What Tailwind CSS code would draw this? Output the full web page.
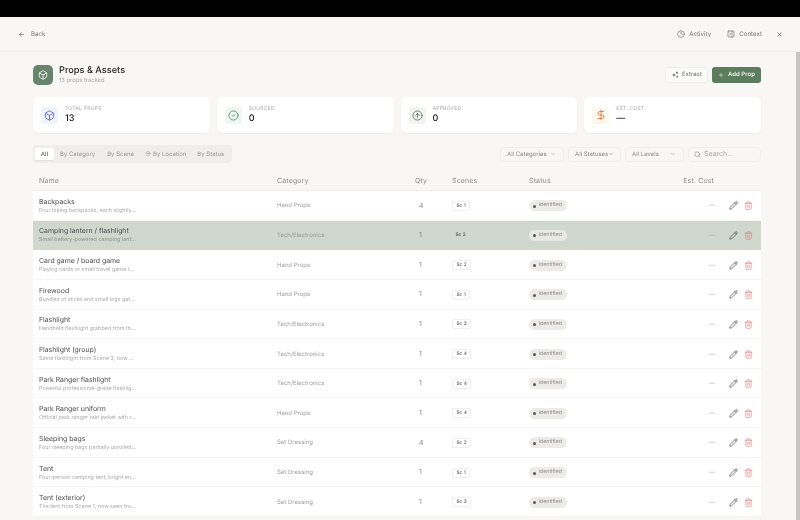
<!DOCTYPE html>
<html lang="en">

<head>
    <meta charset="UTF-8">
    <title>Props &amp; Assets</title>
    <script src="https://cdn.jsdelivr.net/npm/@tailwindcss/browser@4"></script>
</head>

<body class="bg-[#f8f7f5]">
    <svg class="hidden">
        <symbol id="box" viewBox="0 0 24 24" fill="none" stroke="currentColor" stroke-width="2" stroke-linecap="round" stroke-linejoin="round"><path d="M21 8a2 2 0 0 0-1-1.73l-7-4a2 2 0 0 0-2 0l-7 4A2 2 0 0 0 3 8v8a2 2 0 0 0 1 1.73l7 4a2 2 0 0 0 2 0l7-4A2 2 0 0 0 21 16Z"/><path d="m3.3 7 8.7 5 8.7-5"/><path d="M12 22V12"/></symbol>
        <symbol id="chev" viewBox="0 0 24 24" fill="none" stroke="currentColor" stroke-width="2" stroke-linecap="round" stroke-linejoin="round"><path d="m6 9 6 6 6-6"/></symbol>
        <symbol id="pencil" viewBox="0 0 24 24" fill="none" stroke="currentColor" stroke-width="2" stroke-linecap="round" stroke-linejoin="round"><path d="M21.17 6.81a2.82 2.82 0 0 0-3.99-3.99L3.84 16.17a2 2 0 0 0-.5.83l-1.32 4.35a.5.5 0 0 0 .62.62l4.35-1.32a2 2 0 0 0 .83-.5z"/><path d="m15 5 4 4"/></symbol>
        <symbol id="trash" viewBox="0 0 24 24" fill="none" stroke="currentColor" stroke-width="2" stroke-linecap="round" stroke-linejoin="round"><path d="M3 6h18"/><path d="M19 6v14a2 2 0 0 1-2 2H7a2 2 0 0 1-2-2V6"/><path d="M8 6V4a2 2 0 0 1 2-2h4a2 2 0 0 1 2 2v2"/><path d="M10 11v6"/><path d="M14 11v6"/></symbol>
    </svg>

    <div class="relative h-[520px] w-[800px] overflow-hidden font-['Inter',sans-serif] text-[#3d3d3d] blur-[0.3px] [text-rendering:geometricPrecision]">
    <div class="h-[17px] bg-black"></div>

    <header class="flex h-[35px] items-center justify-between border-b border-[#f1f0ed] pl-[18px] pr-[17px] pt-[1px]">
        <div class="flex items-center gap-[6px] text-[6.2px] text-[#777]">
            <svg class="h-[7px] w-[7px] text-[#555]" viewBox="0 0 24 24" fill="none" stroke="currentColor" stroke-width="2" stroke-linecap="round" stroke-linejoin="round"><path d="m12 19-7-7 7-7"/><path d="M19 12H5"/></svg>
            <span>Back</span>
        </div>
        <div class="flex items-center text-[6.2px] text-[#6f6f6f]">
            <svg class="mr-[4px] h-[8px] w-[8px]" viewBox="0 0 24 24" fill="none" stroke="currentColor" stroke-width="2" stroke-linecap="round" stroke-linejoin="round"><circle cx="12" cy="12" r="10"/><path d="M12 6v6l4 2"/></svg>
            <span>Activity</span>
            <svg class="ml-[16px] mr-[4px] h-[8px] w-[8px]" viewBox="0 0 24 24" fill="none" stroke="currentColor" stroke-width="2" stroke-linecap="round" stroke-linejoin="round"><rect x="3" y="3" width="18" height="18" rx="2"/><path d="M15 3v18"/><path d="m8 9 3 3-3 3"/></svg>
            <span>Context</span>
            <svg class="ml-[14px] h-[7px] w-[7px] text-[#444]" viewBox="0 0 24 24" fill="none" stroke="currentColor" stroke-width="2" stroke-linecap="round" stroke-linejoin="round"><path d="M18 6 6 18"/><path d="m6 6 12 12"/></svg>
        </div>
    </header>

    <main class="pl-[33px] pr-[39px]">
        <!-- title row -->
        <div class="flex h-[45px] items-center justify-between">
            <div class="flex items-center gap-[6px]">
                <div class="flex h-[20px] w-[20px] items-center justify-center rounded-[5px] bg-[#66856a] text-white">
                    <svg class="h-[10px] w-[10px]"><use href="#box"/></svg>
                </div>
                <div>
                    <div class="text-[9.2px] leading-[12px] font-medium text-[#1f1f1f]">Props &amp; Assets</div>
                    <div class="text-[5.8px] leading-[8px] text-[#a5a5a5]">13 props tracked</div>
                </div>
            </div>
            <div class="flex items-center gap-[4px]">
                <div class="flex h-[16px] w-[43px] items-center justify-center gap-[3px] rounded-[3px] border border-[#f0efec] bg-[#fafaf8] text-[6px] text-[#6f6f6f]">
                    <svg class="h-[8px] w-[8px]" viewBox="0 0 24 24" fill="currentColor"><path d="M9 5l1.8 5.2L16 12l-5.2 1.8L9 19l-1.8-5.2L2 12l5.2-1.8z"/><circle cx="18" cy="5" r="3"/><circle cx="19" cy="17" r="2.5"/></svg>
                    <span>Extract</span>
                </div>
                <div class="flex h-[16px] w-[49px] items-center justify-center gap-[4px] rounded-[3px] bg-[#5c7c5e] text-[6px] font-semibold text-[#eef2ec]">
                    <svg class="h-[6px] w-[6px]" viewBox="0 0 24 24" fill="none" stroke="currentColor" stroke-width="2" stroke-linecap="round"><path d="M5 12h14"/><path d="M12 5v14"/></svg>
                    <span>Add Prop</span>
                </div>
            </div>
        </div>

        <!-- stats -->
        <div class="grid grid-cols-4 gap-[7px]">
            <div class="flex h-[36px] items-center gap-[7px] rounded-[5px] bg-white pl-[8px] shadow-[0_1px_2px_rgba(0,0,0,0.05)]">
                <div class="flex h-[17px] w-[17px] items-center justify-center rounded-[3px] bg-[#eff3fe] text-[#5b70d8]">
                    <svg class="h-[11px] w-[11px]"><use href="#box"/></svg>
                </div>
                <div>
                    <div class="text-[5px] leading-[7px] tracking-[0.05em] text-[#a8a8a8]">TOTAL PROPS</div>
                    <div class="text-[9px] leading-[12px] font-medium text-[#1c1c1c]">13</div>
                </div>
            </div>
            <div class="flex h-[36px] items-center gap-[7px] rounded-[5px] bg-white pl-[8px] shadow-[0_1px_2px_rgba(0,0,0,0.05)]">
                <div class="flex h-[17px] w-[17px] items-center justify-center rounded-[3px] bg-[#eef7f1] text-[#5a9478]">
                    <svg class="h-[11px] w-[11px]" viewBox="0 0 24 24" fill="none" stroke="currentColor" stroke-width="2" stroke-linecap="round" stroke-linejoin="round"><circle cx="12" cy="12" r="10"/><path d="m9 12 2 2 4-4"/></svg>
                </div>
                <div>
                    <div class="text-[5px] leading-[7px] tracking-[0.05em] text-[#a8a8a8]">SOURCED</div>
                    <div class="text-[9px] leading-[12px] font-medium text-[#1c1c1c]">0</div>
                </div>
            </div>
            <div class="flex h-[36px] items-center gap-[7px] rounded-[5px] bg-white pl-[8px] shadow-[0_1px_2px_rgba(0,0,0,0.05)]">
                <div class="flex h-[17px] w-[17px] items-center justify-center rounded-[3px] bg-[#f1f3ef] text-[#64796a]">
                    <svg class="h-[11px] w-[11px]" viewBox="0 0 24 24" fill="none" stroke="currentColor" stroke-width="2" stroke-linecap="round" stroke-linejoin="round"><circle cx="12" cy="12" r="10"/><path d="m16 12-4-4-4 4"/><path d="M12 16V8"/></svg>
                </div>
                <div>
                    <div class="text-[5px] leading-[7px] tracking-[0.05em] text-[#a8a8a8]">APPROVED</div>
                    <div class="text-[9px] leading-[12px] font-medium text-[#1c1c1c]">0</div>
                </div>
            </div>
            <div class="flex h-[36px] items-center gap-[7px] rounded-[5px] bg-white pl-[8px] shadow-[0_1px_2px_rgba(0,0,0,0.05)]">
                <div class="flex h-[17px] w-[17px] items-center justify-center rounded-[3px] bg-[#fdf7ee] text-[#d58a54]">
                    <svg class="h-[12px] w-[12px]" viewBox="0 0 24 24" fill="none" stroke="currentColor" stroke-width="2" stroke-linecap="round" stroke-linejoin="round"><path d="M12 2v20"/><path d="M17 5H9.5a3.5 3.5 0 0 0 0 7h5a3.5 3.5 0 0 1 0 7H6"/></svg>
                </div>
                <div>
                    <div class="text-[5px] leading-[7px] tracking-[0.05em] text-[#a8a8a8]">EST. COST</div>
                    <div class="text-[9px] leading-[12px] font-medium text-[#1c1c1c]">—</div>
                </div>
            </div>
        </div>

        <!-- tabs and filters -->
        <div class="mt-[12px] flex items-center justify-between">
            <div class="flex h-[18px] w-[199px] items-center rounded-[4px] bg-[#efeeeb] pl-[2px] text-[6px] whitespace-nowrap text-[#9a9a9a]">
                <div class="flex h-[12px] w-[19px] items-center justify-center rounded-[2px] bg-white font-medium text-[#666] shadow-[0_1px_1px_rgba(0,0,0,0.05)]">All</div>
                <div class="ml-[6px]">By Category</div>
                <div class="ml-[12px]">By Scene</div>
                <svg class="ml-[11px] mr-[2px] h-[6px] w-[6px]" viewBox="0 0 24 24" fill="none" stroke="currentColor" stroke-width="2" stroke-linecap="round" stroke-linejoin="round"><path d="M20 10c0 5-5.5 10.2-7.4 11.8a1 1 0 0 1-1.2 0C9.5 20.2 4 15 4 10a8 8 0 0 1 16 0"/><circle cx="12" cy="10" r="3"/></svg>
                <div>By Location</div>
                <div class="ml-[11px]">By Status</div>
            </div>
            <div class="flex items-center text-[6px] whitespace-nowrap text-[#8a8a8a]">
                <div class="flex h-[15px] w-[64px] items-center justify-between rounded-[4px] border border-[#f0efec] pl-[6px] pr-[7px]"><span>All Categories</span><svg class="h-[6px] w-[6px]"><use href="#chev"/></svg></div>
                <div class="ml-[4px] flex h-[15px] w-[53px] items-center justify-between rounded-[4px] border border-[#f0efec] pl-[6px] pr-[6px]"><span>All Statuses</span><svg class="h-[6px] w-[6px]"><use href="#chev"/></svg></div>
                <div class="ml-[4px] flex h-[15px] w-[59px] items-center justify-between rounded-[4px] border border-[#f0efec] pl-[6px] pr-[7px]"><span>All Levels</span><svg class="h-[6px] w-[6px]"><use href="#chev"/></svg></div>
                <div class="ml-[4px] flex h-[15px] w-[73px] items-center gap-[3px] rounded-[5px] border border-[#f0efec] pl-[5px] text-[7px] text-[#a5a5a5]">
                    <svg class="h-[7px] w-[7px] text-[#888]" viewBox="0 0 24 24" fill="none" stroke="currentColor" stroke-width="2" stroke-linecap="round"><circle cx="11" cy="11" r="8"/><path d="m21 21-4.3-4.3"/></svg>
                    <span>Search...</span>
                </div>
            </div>
        </div>

        <!-- table -->
        <div class="mt-[9px] rounded-t-[4px] bg-white text-[6px] text-[#a0a0a0]">
            <div class="grid h-[19px] grid-cols-[238px_138px_37px_77px_117px_75px_40px] items-center rounded-t-[4px] border-b border-[#f0efec] bg-[#f8f7f5] pl-[6px] pt-[1px] text-[7px] tracking-[0.02em] text-[#8c8c8c]">
                <div>Name</div><div>Category</div><div>Qty</div><div>Scenes</div><div>Status</div><div class="pr-[7px] text-right">Est. Cost</div><div></div>
            </div>

            <div class="grid h-[29.65px] grid-cols-[238px_138px_37px_77px_117px_75px_40px] items-center border-b border-[#f6f5f3] pl-[6px] pt-[1px]">
                <div><div class="text-[6.9px] leading-[11px] text-[#4a4a4a]">Backpacks</div><div class="text-[5.4px] leading-[9px] text-[#aaa]">Four hiking backpacks, each slightly...</div></div>
                <div>Hand Props</div><div class="pl-[4px] text-[7px] text-[#888]">4</div>
                <div class="flex"><span class="rounded-[2px] border border-[#f0efec] px-[3.5px] text-[4.8px] leading-[8px] font-medium text-[#666]">Sc 1</span></div>
                <div class="flex"><span class="flex h-[11px] w-[38px] items-center gap-[2.5px] rounded-full bg-[#ecebe7] pl-[4px] pt-[1px] text-[5.3px] text-[#8e8e8e]"><i class="h-[3px] w-[3px] rounded-full bg-[#555560]"></i>Identified</span></div>
                <div class="pr-[6px] text-right text-[#aaa]">—</div>
                <div class="flex items-center gap-[6px] pl-[8px] text-[#555]"><svg class="h-[9px] w-[9px]"><use href="#pencil"/></svg><svg class="h-[9px] w-[9px] text-[#e58a88]"><use href="#trash"/></svg></div>
            </div>

            <div class="grid h-[29.65px] grid-cols-[238px_138px_37px_77px_117px_75px_40px] items-center border-b border-[#d0d8cd] bg-[#d0d8cd] pl-[6px] pt-[1px] text-[#969c94]">
                <div><div class="text-[6.9px] leading-[11px] text-[#4a4a4a]">Camping lantern / flashlight</div><div class="text-[5.4px] leading-[9px] text-[#8f958c]">Small battery-powered camping lant...</div></div>
                <div>Tech/Electronics</div><div class="pl-[4px] text-[7px] text-[#7f857d]">1</div>
                <div class="flex"><span class="px-[3.5px] text-[4.8px] leading-[8px] font-medium text-[#555a53]">Sc 2</span></div>
                <div class="flex"><span class="flex h-[11px] w-[38px] items-center gap-[2.5px] rounded-full bg-[#e9e9e4] pl-[4px] pt-[1px] text-[5.3px] text-[#8e8e8e]"><i class="h-[3px] w-[3px] rounded-full bg-[#555560]"></i>Identified</span></div>
                <div class="pr-[6px] text-right text-[#9aa097]">—</div>
                <div class="flex items-center gap-[6px] pl-[8px] text-[#555]"><svg class="h-[9px] w-[9px]"><use href="#pencil"/></svg><svg class="h-[9px] w-[9px] text-[#dc8583]"><use href="#trash"/></svg></div>
            </div>

            <div class="grid h-[29.65px] grid-cols-[238px_138px_37px_77px_117px_75px_40px] items-center border-b border-[#f6f5f3] pl-[6px] pt-[1px]">
                <div><div class="text-[6.9px] leading-[11px] text-[#4a4a4a]">Card game / board game</div><div class="text-[5.4px] leading-[9px] text-[#aaa]">Playing cards or small travel game t...</div></div>
                <div>Hand Props</div><div class="pl-[4px] text-[7px] text-[#888]">1</div>
                <div class="flex"><span class="rounded-[2px] border border-[#f0efec] px-[3.5px] text-[4.8px] leading-[8px] font-medium text-[#666]">Sc 2</span></div>
                <div class="flex"><span class="flex h-[11px] w-[38px] items-center gap-[2.5px] rounded-full bg-[#ecebe7] pl-[4px] pt-[1px] text-[5.3px] text-[#8e8e8e]"><i class="h-[3px] w-[3px] rounded-full bg-[#555560]"></i>Identified</span></div>
                <div class="pr-[6px] text-right text-[#aaa]">—</div>
                <div class="flex items-center gap-[6px] pl-[8px] text-[#555]"><svg class="h-[9px] w-[9px]"><use href="#pencil"/></svg><svg class="h-[9px] w-[9px] text-[#e58a88]"><use href="#trash"/></svg></div>
            </div>

            <div class="grid h-[29.65px] grid-cols-[238px_138px_37px_77px_117px_75px_40px] items-center border-b border-[#f6f5f3] pl-[6px] pt-[1px]">
                <div><div class="text-[6.9px] leading-[11px] text-[#4a4a4a]">Firewood</div><div class="text-[5.4px] leading-[9px] text-[#aaa]">Bundles of sticks and small logs gat...</div></div>
                <div>Hand Props</div><div class="pl-[4px] text-[7px] text-[#888]">1</div>
                <div class="flex"><span class="rounded-[2px] border border-[#f0efec] px-[3.5px] text-[4.8px] leading-[8px] font-medium text-[#666]">Sc 1</span></div>
                <div class="flex"><span class="flex h-[11px] w-[38px] items-center gap-[2.5px] rounded-full bg-[#ecebe7] pl-[4px] pt-[1px] text-[5.3px] text-[#8e8e8e]"><i class="h-[3px] w-[3px] rounded-full bg-[#555560]"></i>Identified</span></div>
                <div class="pr-[6px] text-right text-[#aaa]">—</div>
                <div class="flex items-center gap-[6px] pl-[8px] text-[#555]"><svg class="h-[9px] w-[9px]"><use href="#pencil"/></svg><svg class="h-[9px] w-[9px] text-[#e58a88]"><use href="#trash"/></svg></div>
            </div>

            <div class="grid h-[29.65px] grid-cols-[238px_138px_37px_77px_117px_75px_40px] items-center border-b border-[#f6f5f3] pl-[6px] pt-[1px]">
                <div><div class="text-[6.9px] leading-[11px] text-[#4a4a4a]">Flashlight</div><div class="text-[5.4px] leading-[9px] text-[#aaa]">Handheld flashlight grabbed from th...</div></div>
                <div>Tech/Electronics</div><div class="pl-[4px] text-[7px] text-[#888]">1</div>
                <div class="flex"><span class="rounded-[2px] border border-[#f0efec] px-[3.5px] text-[4.8px] leading-[8px] font-medium text-[#666]">Sc 3</span></div>
                <div class="flex"><span class="flex h-[11px] w-[38px] items-center gap-[2.5px] rounded-full bg-[#ecebe7] pl-[4px] pt-[1px] text-[5.3px] text-[#8e8e8e]"><i class="h-[3px] w-[3px] rounded-full bg-[#555560]"></i>Identified</span></div>
                <div class="pr-[6px] text-right text-[#aaa]">—</div>
                <div class="flex items-center gap-[6px] pl-[8px] text-[#555]"><svg class="h-[9px] w-[9px]"><use href="#pencil"/></svg><svg class="h-[9px] w-[9px] text-[#e58a88]"><use href="#trash"/></svg></div>
            </div>

            <div class="grid h-[29.65px] grid-cols-[238px_138px_37px_77px_117px_75px_40px] items-center border-b border-[#f6f5f3] pl-[6px] pt-[1px]">
                <div><div class="text-[6.9px] leading-[11px] text-[#4a4a4a]">Flashlight (group)</div><div class="text-[5.4px] leading-[9px] text-[#aaa]">Same flashlight from Scene 3, now ...</div></div>
                <div>Tech/Electronics</div><div class="pl-[4px] text-[7px] text-[#888]">1</div>
                <div class="flex"><span class="rounded-[2px] border border-[#f0efec] px-[3.5px] text-[4.8px] leading-[8px] font-medium text-[#666]">Sc 4</span></div>
                <div class="flex"><span class="flex h-[11px] w-[38px] items-center gap-[2.5px] rounded-full bg-[#ecebe7] pl-[4px] pt-[1px] text-[5.3px] text-[#8e8e8e]"><i class="h-[3px] w-[3px] rounded-full bg-[#555560]"></i>Identified</span></div>
                <div class="pr-[6px] text-right text-[#aaa]">—</div>
                <div class="flex items-center gap-[6px] pl-[8px] text-[#555]"><svg class="h-[9px] w-[9px]"><use href="#pencil"/></svg><svg class="h-[9px] w-[9px] text-[#e58a88]"><use href="#trash"/></svg></div>
            </div>

            <div class="grid h-[29.65px] grid-cols-[238px_138px_37px_77px_117px_75px_40px] items-center border-b border-[#f6f5f3] pl-[6px] pt-[1px]">
                <div><div class="text-[6.9px] leading-[11px] text-[#4a4a4a]">Park Ranger flashlight</div><div class="text-[5.4px] leading-[9px] text-[#aaa]">Powerful professional-grade flashlig...</div></div>
                <div>Tech/Electronics</div><div class="pl-[4px] text-[7px] text-[#888]">1</div>
                <div class="flex"><span class="rounded-[2px] border border-[#f0efec] px-[3.5px] text-[4.8px] leading-[8px] font-medium text-[#666]">Sc 4</span></div>
                <div class="flex"><span class="flex h-[11px] w-[38px] items-center gap-[2.5px] rounded-full bg-[#ecebe7] pl-[4px] pt-[1px] text-[5.3px] text-[#8e8e8e]"><i class="h-[3px] w-[3px] rounded-full bg-[#555560]"></i>Identified</span></div>
                <div class="pr-[6px] text-right text-[#aaa]">—</div>
                <div class="flex items-center gap-[6px] pl-[8px] text-[#555]"><svg class="h-[9px] w-[9px]"><use href="#pencil"/></svg><svg class="h-[9px] w-[9px] text-[#e58a88]"><use href="#trash"/></svg></div>
            </div>

            <div class="grid h-[29.65px] grid-cols-[238px_138px_37px_77px_117px_75px_40px] items-center border-b border-[#f6f5f3] pl-[6px] pt-[1px]">
                <div><div class="text-[6.9px] leading-[11px] text-[#4a4a4a]">Park Ranger uniform</div><div class="text-[5.4px] leading-[9px] text-[#aaa]">Official park ranger rain jacket with r...</div></div>
                <div>Hand Props</div><div class="pl-[4px] text-[7px] text-[#888]">1</div>
                <div class="flex"><span class="rounded-[2px] border border-[#f0efec] px-[3.5px] text-[4.8px] leading-[8px] font-medium text-[#666]">Sc 4</span></div>
                <div class="flex"><span class="flex h-[11px] w-[38px] items-center gap-[2.5px] rounded-full bg-[#ecebe7] pl-[4px] pt-[1px] text-[5.3px] text-[#8e8e8e]"><i class="h-[3px] w-[3px] rounded-full bg-[#555560]"></i>Identified</span></div>
                <div class="pr-[6px] text-right text-[#aaa]">—</div>
                <div class="flex items-center gap-[6px] pl-[8px] text-[#555]"><svg class="h-[9px] w-[9px]"><use href="#pencil"/></svg><svg class="h-[9px] w-[9px] text-[#e58a88]"><use href="#trash"/></svg></div>
            </div>

            <div class="grid h-[29.65px] grid-cols-[238px_138px_37px_77px_117px_75px_40px] items-center border-b border-[#f6f5f3] pl-[6px] pt-[1px]">
                <div><div class="text-[6.9px] leading-[11px] text-[#4a4a4a]">Sleeping bags</div><div class="text-[5.4px] leading-[9px] text-[#aaa]">Four sleeping bags partially unrolled...</div></div>
                <div>Set Dressing</div><div class="pl-[4px] text-[7px] text-[#888]">4</div>
                <div class="flex"><span class="rounded-[2px] border border-[#f0efec] px-[3.5px] text-[4.8px] leading-[8px] font-medium text-[#666]">Sc 2</span></div>
                <div class="flex"><span class="flex h-[11px] w-[38px] items-center gap-[2.5px] rounded-full bg-[#ecebe7] pl-[4px] pt-[1px] text-[5.3px] text-[#8e8e8e]"><i class="h-[3px] w-[3px] rounded-full bg-[#555560]"></i>Identified</span></div>
                <div class="pr-[6px] text-right text-[#aaa]">—</div>
                <div class="flex items-center gap-[6px] pl-[8px] text-[#555]"><svg class="h-[9px] w-[9px]"><use href="#pencil"/></svg><svg class="h-[9px] w-[9px] text-[#e58a88]"><use href="#trash"/></svg></div>
            </div>

            <div class="grid h-[29.65px] grid-cols-[238px_138px_37px_77px_117px_75px_40px] items-center border-b border-[#f6f5f3] pl-[6px] pt-[1px]">
                <div><div class="text-[6.9px] leading-[11px] text-[#4a4a4a]">Tent</div><div class="text-[5.4px] leading-[9px] text-[#aaa]">Four-person camping tent, bright en...</div></div>
                <div>Set Dressing</div><div class="pl-[4px] text-[7px] text-[#888]">1</div>
                <div class="flex"><span class="rounded-[2px] border border-[#f0efec] px-[3.5px] text-[4.8px] leading-[8px] font-medium text-[#666]">Sc 1</span></div>
                <div class="flex"><span class="flex h-[11px] w-[38px] items-center gap-[2.5px] rounded-full bg-[#ecebe7] pl-[4px] pt-[1px] text-[5.3px] text-[#8e8e8e]"><i class="h-[3px] w-[3px] rounded-full bg-[#555560]"></i>Identified</span></div>
                <div class="pr-[6px] text-right text-[#aaa]">—</div>
                <div class="flex items-center gap-[6px] pl-[8px] text-[#555]"><svg class="h-[9px] w-[9px]"><use href="#pencil"/></svg><svg class="h-[9px] w-[9px] text-[#e58a88]"><use href="#trash"/></svg></div>
            </div>

            <div class="grid h-[29.65px] grid-cols-[238px_138px_37px_77px_117px_75px_40px] items-center border-b border-[#f6f5f3] pl-[6px] pt-[1px]">
                <div><div class="text-[6.9px] leading-[11px] text-[#4a4a4a]">Tent (exterior)</div><div class="text-[5.4px] leading-[9px] text-[#aaa]">The tent from Scene 1, now seen fro...</div></div>
                <div>Set Dressing</div><div class="pl-[4px] text-[7px] text-[#888]">1</div>
                <div class="flex"><span class="rounded-[2px] border border-[#f0efec] px-[3.5px] text-[4.8px] leading-[8px] font-medium text-[#666]">Sc 3</span></div>
                <div class="flex"><span class="flex h-[11px] w-[38px] items-center gap-[2.5px] rounded-full bg-[#ecebe7] pl-[4px] pt-[1px] text-[5.3px] text-[#8e8e8e]"><i class="h-[3px] w-[3px] rounded-full bg-[#555560]"></i>Identified</span></div>
                <div class="pr-[6px] text-right text-[#aaa]">—</div>
                <div class="flex items-center gap-[6px] pl-[8px] text-[#555]"><svg class="h-[9px] w-[9px]"><use href="#pencil"/></svg><svg class="h-[9px] w-[9px] text-[#e58a88]"><use href="#trash"/></svg></div>
            </div>
        </div>
    </main>

    <!-- scrollbar sits over the page edge -->
    <div class="absolute bottom-0 right-0 top-[52px] w-[4px] bg-[#c6c6c6]"></div>
    </div>
</body>

</html>
